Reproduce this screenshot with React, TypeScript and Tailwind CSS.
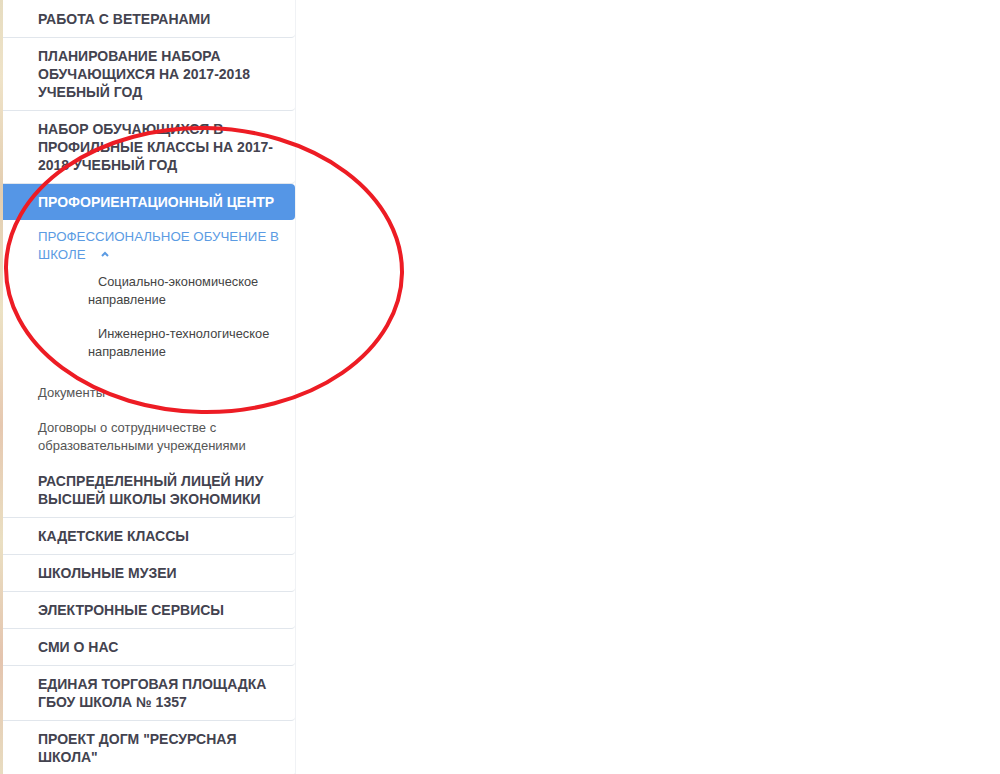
import React from "react";

const font = { fontFamily: '"Liberation Sans", Arial, sans-serif' };

function Item({ children }: { children: React.ReactNode }) {
  return (
    <div className="bg-white border-b border-[#e1e6ec] rounded-br-[4px] pl-[35px] pr-[10px] py-[9px] text-[14px] leading-[18px] font-bold uppercase text-[#43434f]">
      {children}
    </div>
  );
}

export default function App() {
  return (
    <div className="relative w-[1000px] h-[774px] overflow-hidden bg-white flex" style={font}>
      <div className="w-[3px] h-full bg-[linear-gradient(180deg,#e6dcc0_0%,#efe3c8_10%,#e3cdb0_25%,#ece2c4_40%,#e6c8b0_55%,#eadfc2_70%,#e4c4ae_85%,#e8dcc0_100%)]" />
      <div className="w-[293px] flex flex-col pt-[1px] border-r border-[#f0f2f5]">
        <Item>Работа с ветеранами</Item>
        <Item>Планирование набора обучающихся на 2017-2018 учебный год</Item>
        <Item>Набор обучающихся в профильные классы на 2017-2018 учебный год</Item>
        <div className="bg-[#5596e6] rounded-r-[4px] pl-[35px] pr-[10px] py-[9px] text-[14px] leading-[18px] font-bold uppercase text-white">
          Профориентационный центр
        </div>
        <div className="bg-white pl-[35px] pr-0 pt-[8px] text-[13.3px] leading-[18px] uppercase text-[#5b9be3]">
          Профессиональное обучение в школе
          <svg className="inline-block ml-[15px] mb-[2px]" width="8" height="6" viewBox="0 0 8 6">
            <polyline points="1,5 4,2 7,5" fill="none" stroke="#5b9be3" strokeWidth="2" />
          </svg>
        </div>
        <div className="pl-[85px] pr-[16px] pt-[9px] text-[12.8px] leading-[18px] text-[#444]">
          <div className="indent-[10px]">Социально-экономическое направление</div>
          <div className="indent-[10px] mt-[16px]">Инженерно-технологическое направление</div>
        </div>
        <div className="pl-[35px] pr-[10px] pt-[23px] text-[13px] leading-[18px] text-[#555]">
          <div>Документы</div>
          <div className="mt-[17px]">Договоры о сотрудничестве с образовательными учреждениями</div>
        </div>
        <div className="bg-white border-b border-[#e1e6ec] rounded-br-[4px] pl-[35px] pr-[10px] pt-[17px] pb-[9px] text-[14px] leading-[18px] font-bold uppercase text-[#43434f]">
          Распределенный лицей НИУ Высшей школы экономики
        </div>
        <Item>Кадетские классы</Item>
        <Item>Школьные музеи</Item>
        <Item>Электронные сервисы</Item>
        <Item>СМИ о нас</Item>
        <Item>Единая торговая площадка ГБОУ Школа № 1357</Item>
        <Item>Проект ДОГМ "Ресурсная школа"</Item>
      </div>
      <svg className="absolute left-0 top-0 pointer-events-none" width="1000" height="774">
        <ellipse cx="204" cy="270" rx="198" ry="142" fill="none" stroke="#ed1c24" strokeWidth="4" transform="rotate(1 204 270)" />
      </svg>
    </div>
  );
}
